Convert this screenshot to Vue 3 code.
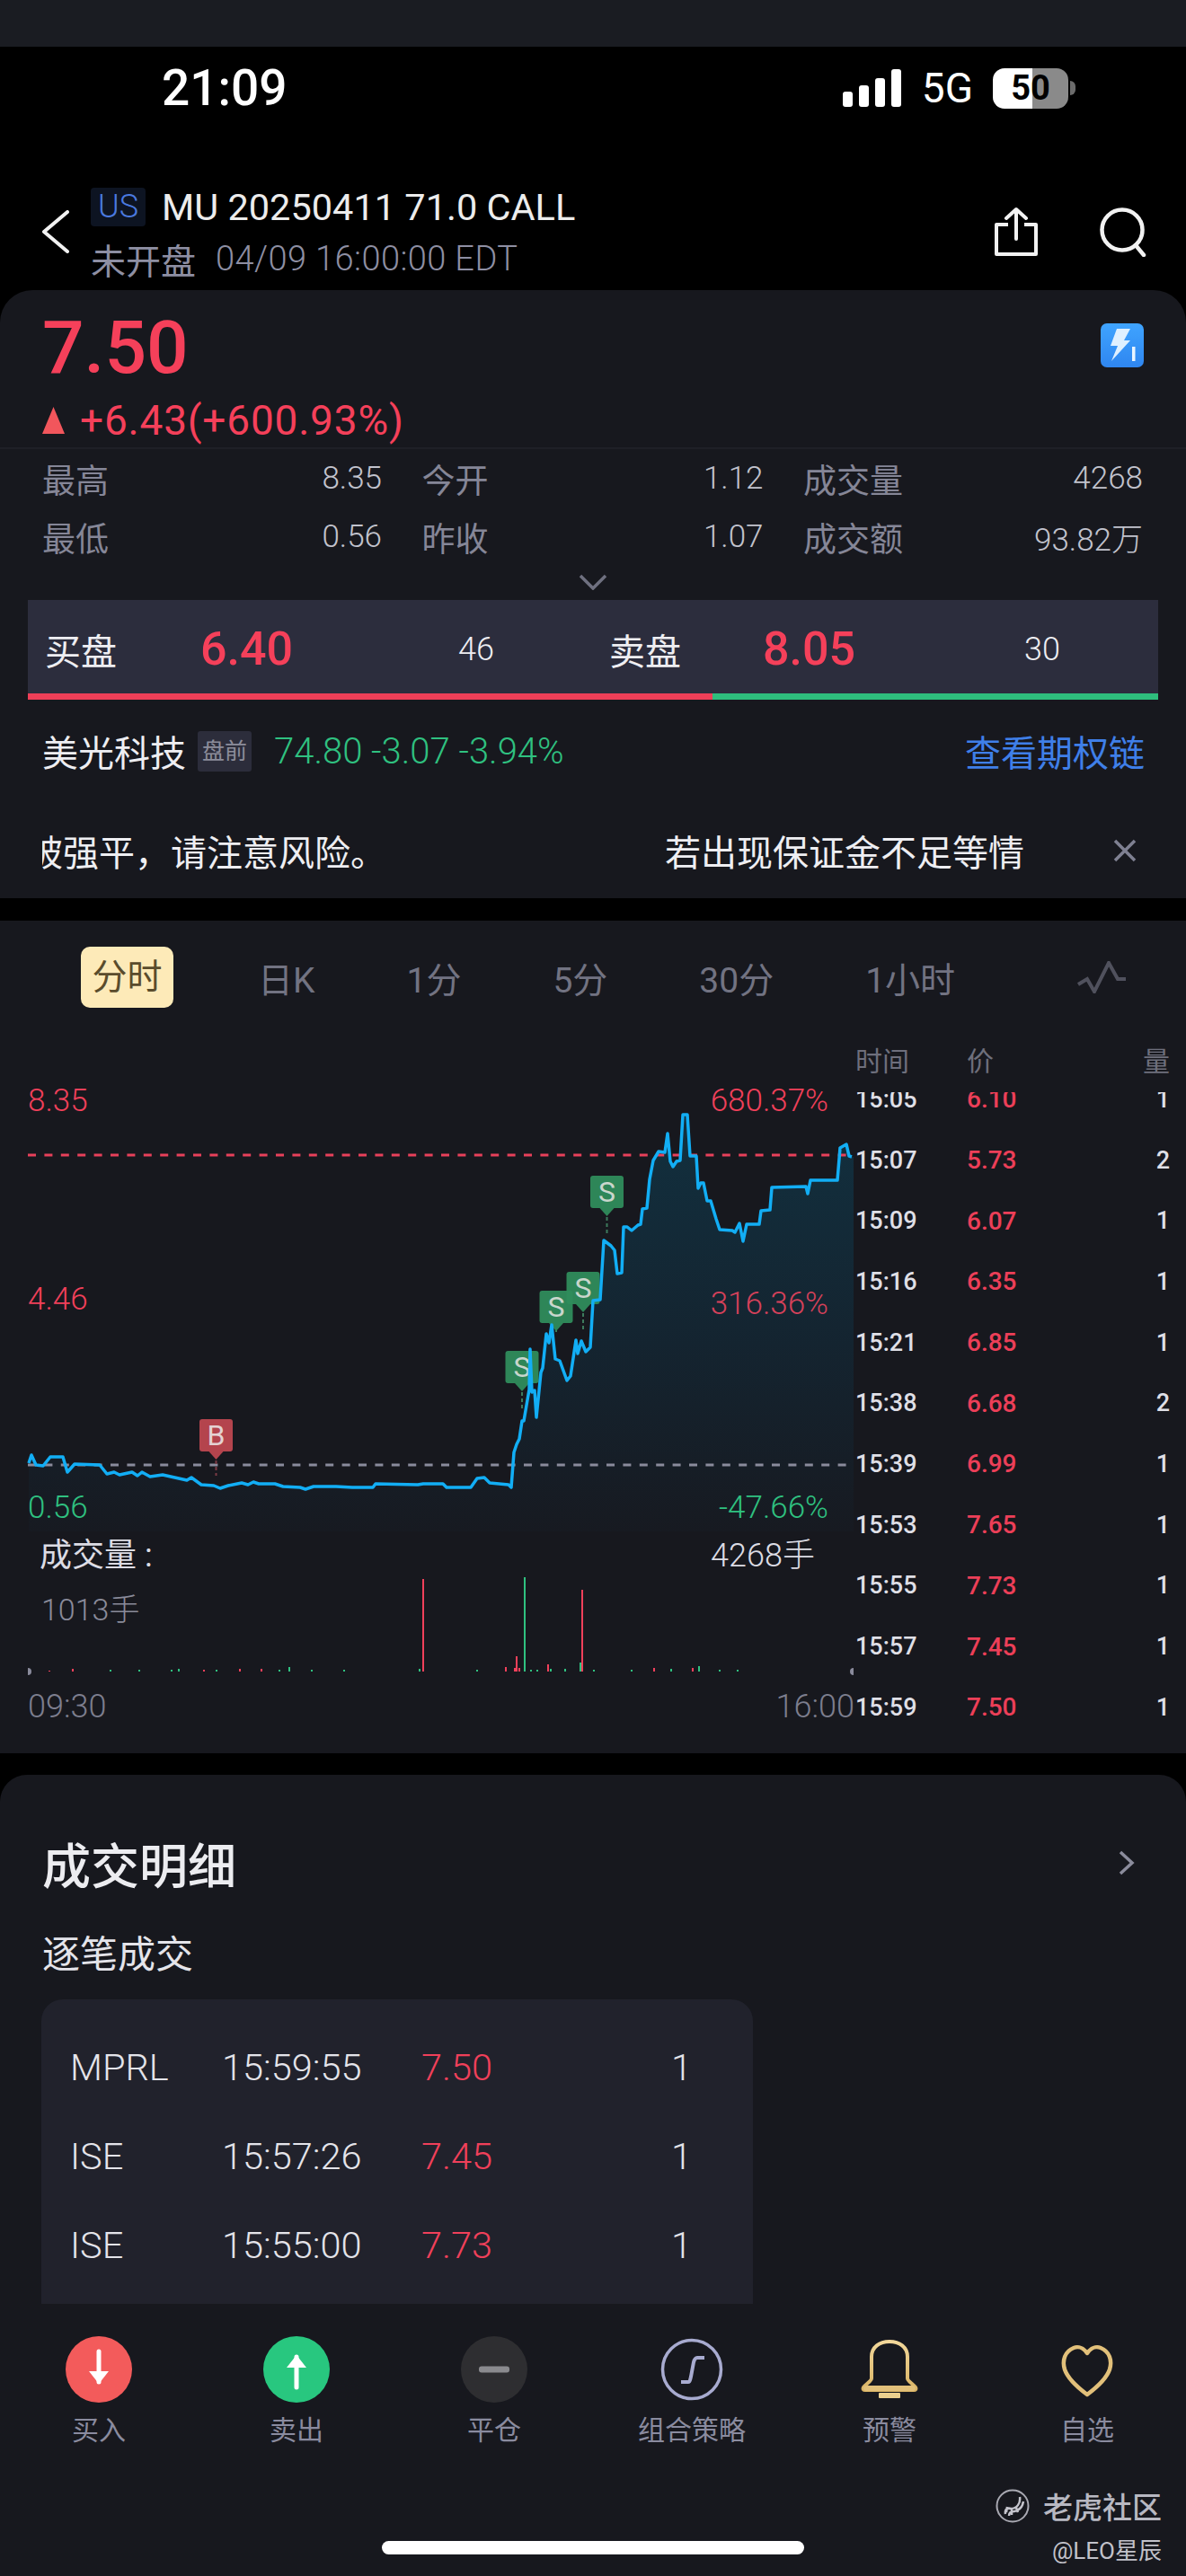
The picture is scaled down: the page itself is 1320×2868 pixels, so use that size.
<script setup>
const stats = [
  { label: '最高', value: '8.35' },
  { label: '今开', value: '1.12' },
  { label: '成交量', value: '4268' },
  { label: '最低', value: '0.56' },
  { label: '昨收', value: '1.07' },
  { label: '成交额', value: '93.82万' }
];

const tabs = ['日K', '1分', '5分', '30分', '1小时'];

const ticks = [
  ['15:05', '6.10', 1], ['15:07', '5.73', 2], ['15:09', '6.07', 1], ['15:16', '6.35', 1],
  ['15:21', '6.85', 1], ['15:38', '6.68', 2], ['15:39', '6.99', 1], ['15:53', '7.65', 1],
  ['15:55', '7.73', 1], ['15:57', '7.45', 1], ['15:59', '7.50', 1]
];

const trades = [
  ['MPRL', '15:59:55', '7.50', 1],
  ['ISE', '15:57:26', '7.45', 1],
  ['ISE', '15:55:00', '7.73', 1]
];

const actions = ['买入', '卖出', '平仓', '组合策略', '预警', '自选'];

// price line, in page coordinates
const line = [
  [32,1629],[35,1620],[40,1631],[48,1632],[56,1622],[70,1622],[75,1639],[83,1630],[111,1631],[119,1641],
  [127,1639],[133,1642],[147,1639],[153,1643],[158,1639],[167,1644],[181,1642],[208,1648],[213,1645],[224,1653],
  [238,1654],[245,1657],[254,1654],[269,1651],[276,1653],[282,1650],[288,1652],[306,1652],[315,1655],[334,1656],
  [340,1658],[349,1655],[374,1655],[392,1656],[415,1656],[418,1652],[465,1653],[471,1652],[493,1652],[497,1656],
  [524,1656],[531,1646],[539,1645],[545,1651],[566,1653],[569,1656],[572,1617],[575,1608],[578,1602],[581,1582],
  [583,1582],[589,1547],[590,1502],[592,1550],[595,1548],[597,1578],[602,1528],[604,1523],[608,1485],[611,1495],
  [614,1475],[618,1513],[623,1515],[631,1537],[635,1532],[641,1492],[643,1507],[647,1493],[652,1505],[657,1500],
  [660,1448],[668,1447],[672,1381],[680,1387],[684,1392],[687,1418],[692,1417],[694,1366],[698,1366],[703,1370],
  [710,1364],[713,1363],[715,1346],[720,1345],[723,1313],[727,1292],[733,1282],[740,1283],[743,1262],[746,1293],
  [749,1299],[753,1293],[757,1292],[760,1241],[765,1241],[768,1287],[775,1287],[777,1323],[780,1317],[783,1317],
  [787,1337],[791,1337],[797,1357],[801,1369],[815,1370],[818,1372],[823,1362],[827,1382],[831,1363],[845,1363],
  [847,1348],[857,1347],[859,1322],[897,1321],[899,1329],[902,1314],[932,1314],[935,1278],[942,1274],[945,1287],[948,1288]
];
const linePoints = line.map((p) => p.join(',')).join(' ');
const areaPoints = `32,1705 ${linePoints} 950,1288 950,1705`;

const markers = [
  { x: 581, y: 1504, h: 1568, label: 'S' },
  { x: 619, y: 1437, h: 1481, label: 'S' },
  { x: 649, y: 1416, h: 1480, label: 'S' },
  { x: 675.5, y: 1309, h: 1373, label: 'S' },
  { x: 240.5, y: 1580, h: 1643, label: 'B' }
];

const red = '#f0405a';
const green = '#2fc180';
const bars = [
  [470, 1758, red], [583, 1756, green], [647, 1770, red], [574, 1844, red], [609, 1853, red],
  [562, 1856, red], [645, 1851, green], [321, 1856, green], [80, 1858, red], [777, 1855, green],
  [770, 1857, red], [727, 1857, red], [572, 1857, red], [577, 1857, red], [466, 1858, green],
  [266, 1858, red], [290, 1858, red], [198, 1858, green], [54, 1860, red], [122, 1859, green],
  [154, 1859, green], [190, 1859, green], [226, 1859, red], [240, 1859, green], [310, 1859, green],
  [346, 1859, green], [382, 1859, green], [530, 1859, green], [590, 1859, green], [597, 1859, green],
  [612, 1858, green], [628, 1858, green], [660, 1859, green], [702, 1859, green], [746, 1858, green],
  [800, 1859, green], [820, 1859, green]
];
</script>

<template>
  <div class="page" lang="zh-CN">
    <div class="top-band"></div>

    <header class="header">
      <div class="status">
        <span class="clock">21:09</span>
        <div class="status-right">
          <svg class="signal" width="66" height="42" viewBox="0 0 66 42">
            <rect x="0" y="25" width="11" height="17" rx="3" />
            <rect x="18" y="18" width="11" height="24" rx="3" />
            <rect x="36" y="10" width="11" height="32" rx="3" />
            <rect x="54" y="0" width="11" height="42" rx="3" />
          </svg>
          <span class="net">5G</span>
          <div class="battery"><span>50</span></div>
          <i class="battery-nub"></i>
        </div>
      </div>

      <div class="nav">
        <svg class="back" width="53" height="48" viewBox="0 0 53 48">
          <path d="M29 2 L3 24 L29 46" fill="none" stroke="#f2f2f2" stroke-width="4" stroke-linecap="round" stroke-linejoin="round" />
        </svg>
        <div class="nav-title">
          <div class="title-line">
            <span class="market">US</span>
            <span class="contract">MU 20250411 71.0 CALL</span>
          </div>
          <div class="sub-line">
            <span class="session">未开盘</span>
            <span class="stamp">04/09 16:00:00 EDT</span>
          </div>
        </div>
        <svg class="share" width="52" height="56" viewBox="0 0 52 56">
          <path d="M17 20 H4 V53 H48 V20 H35" fill="none" stroke="#f2f2f2" stroke-width="4" stroke-linejoin="round" />
          <path d="M26 36 V4 M15 13 L26 3 L37 13" fill="none" stroke="#f2f2f2" stroke-width="4" stroke-linecap="round" stroke-linejoin="round" />
        </svg>
        <svg class="search" width="54" height="56" viewBox="0 0 54 56">
          <circle cx="26" cy="26" r="22.5" fill="none" stroke="#f2f2f2" stroke-width="4.5" />
          <path d="M41 43 L50 54" stroke="#f2f2f2" stroke-width="4.5" stroke-linecap="round" />
        </svg>
      </div>
    </header>

    <section class="quote-panel">
      <div class="quote">
        <div>
          <div class="price">7.50</div>
          <div class="change">
            <svg width="25" height="30" viewBox="0 0 25 30"><path d="M12.5 0 L25 30 H0 Z" fill="#f2565c" /></svg>
            <span>+6.43(+600.93%)</span>
          </div>
        </div>
        <svg class="bolt" width="48" height="49" viewBox="0 0 48 49">
          <defs>
            <linearGradient id="boltBg" x1="0" y1="0" x2="0" y2="1">
              <stop offset="0" stop-color="#3fa4ff" />
              <stop offset="1" stop-color="#2f86f0" />
            </linearGradient>
          </defs>
          <rect width="48" height="49" rx="7" fill="url(#boltBg)" />
          <path d="M18 6 H33 L26 19 H33 L12 42 L19 25 H11 Z" fill="#dff0ff" />
          <rect x="35" y="26" width="3.5" height="16" fill="#eaf5ff" />
        </svg>
      </div>

      <div class="stats">
        <div v-for="s in stats" :key="s.label" class="stat">
          <span class="stat-label">{{ s.label }}</span>
          <span class="stat-value">{{ s.value }}</span>
        </div>
      </div>

      <div class="expand">
        <svg width="32" height="18" viewBox="0 0 32 18">
          <path d="M2 2 L16 16 L30 2" fill="none" stroke="#6f7080" stroke-width="3.5" />
        </svg>
      </div>

      <div class="book">
        <div class="book-row">
          <span class="book-label">买盘</span>
          <span class="book-price">6.40</span>
          <span class="book-size">46</span>
          <span class="book-label ask">卖盘</span>
          <span class="book-price">8.05</span>
          <span class="book-size">30</span>
        </div>
        <div class="book-bar"><i class="bar-buy"></i><i class="bar-sell"></i></div>
      </div>

      <div class="underlying">
        <span class="under-name">美光科技</span>
        <span class="under-tag">盘前</span>
        <span class="under-quote">74.80 -3.07 -3.94%</span>
        <span class="chain-link">查看期权链</span>
      </div>

      <div class="notice">
        <div class="notice-window">
          <div class="notice-track">
            <span>被强平，请注意风险。</span>
            <span>若出现保证金不足等情</span>
          </div>
        </div>
        <svg class="notice-close" width="28" height="28" viewBox="0 0 28 28">
          <path d="M3 3 L25 25 M25 3 L3 25" stroke="#7f8092" stroke-width="3.5" />
        </svg>
      </div>
    </section>

    <section class="chart-panel">
      <div class="tabs">
        <span class="tab-active">分时</span>
        <span v-for="t in tabs" :key="t" class="tab">{{ t }}</span>
        <svg class="tab-icon" width="58" height="36" viewBox="1200 1070 58 36">
          <polyline points="1202,1096 1212,1090 1220,1104 1236,1072 1246,1090 1255,1090" fill="none" stroke="#50515d" stroke-width="4" />
        </svg>
      </div>

      <div class="chart-body">
        <div class="plot">
          <svg class="plot-svg" width="952" height="802" viewBox="0 1150 952 802">
            <defs>
              <linearGradient id="areaFill" x1="0" y1="0" x2="0" y2="1">
                <stop offset="0" stop-color="#12303f" />
                <stop offset="0.55" stop-color="#142430" />
                <stop offset="1" stop-color="#171a21" />
              </linearGradient>
            </defs>
            <polygon :points="areaPoints" fill="url(#areaFill)" />
            <line x1="31" y1="1286" x2="950" y2="1286" stroke="#e8405a" stroke-width="3" stroke-dasharray="9 9.4" />
            <line x1="31" y1="1631" x2="950" y2="1631" stroke="#8a8b9c" stroke-width="3" stroke-dasharray="9 9.4" />

            <g v-for="m in markers" :key="m.x" :class="m.label === 'B' ? 'mark-buy' : 'mark-sell'">
              <line :x1="m.x" :y1="m.y + 46" :x2="m.x" :y2="m.h" stroke-width="2" stroke-dasharray="4 3" class="mark-stem" />
              <rect :x="m.x - 18.5" :y="m.y" width="37" height="36" rx="3" class="mark-box" />
              <path :d="`M${m.x - 8} ${m.y + 36} L${m.x} ${m.y + 45} L${m.x + 8} ${m.y + 36} Z`" class="mark-box" />
              <text :x="m.x" :y="m.y + 29" text-anchor="middle" class="mark-text">{{ m.label }}</text>
            </g>

            <polyline :points="linePoints" fill="none" stroke="#12aef5" stroke-width="3.5" stroke-linejoin="round" />

            <rect v-for="(b, i) in bars" :key="i" :x="b[0]" :y="b[1]" width="2" :height="1861 - b[1]" :fill="b[2]" />
            <path d="M31 1857 A4 4 0 0 1 31 1865 Z" fill="#8a8b9c" />
            <path d="M950 1857 A4 4 0 0 0 950 1865 Z" fill="#8a8b9c" />
          </svg>

          <span class="axis axis-up left" style="top: 56px">8.35</span>
          <span class="axis axis-up left" style="top: 277px">4.46</span>
          <span class="axis axis-down left" style="top: 509px">0.56</span>
          <span class="axis axis-up right" style="top: 56px">680.37%</span>
          <span class="axis axis-mid right" style="top: 282px">316.36%</span>
          <span class="axis axis-down right" style="top: 509px">-47.66%</span>

          <span class="vol-title">成交量 :</span>
          <span class="vol-total">4268手</span>
          <span class="vol-now">1013手</span>
          <span class="time-from">09:30</span>
          <span class="time-to">16:00</span>
        </div>

        <div class="ticks">
          <div class="ticks-head">
            <span>时间</span>
            <span>价</span>
            <span class="qty">量</span>
          </div>
          <div class="ticks-list">
            <div class="ticks-inner">
              <div v-for="t in ticks" :key="t[0]" class="tick">
                <span>{{ t[0] }}</span>
                <span class="tick-price">{{ t[1] }}</span>
                <span class="qty">{{ t[2] }}</span>
              </div>
            </div>
          </div>
        </div>
      </div>
    </section>

    <section class="detail-panel">
      <div class="detail-head">
        <h2>成交明细</h2>
        <svg width="20" height="30" viewBox="0 0 20 30">
          <path d="M3 3 L16 15 L3 27" fill="none" stroke="#8b8c9c" stroke-width="3.5" />
        </svg>
      </div>
      <div class="detail-sub">逐笔成交</div>
      <div class="trade-card">
        <div v-for="t in trades" :key="t[1]" class="trade">
          <span>{{ t[0] }}</span>
          <span>{{ t[1] }}</span>
          <span class="trade-price">{{ t[2] }}</span>
          <span class="trade-qty">{{ t[3] }}</span>
        </div>
      </div>
    </section>

    <footer class="actions">
      <div v-for="(a, i) in actions" :key="a" class="action">
        <svg width="80" height="80" viewBox="0 0 80 80">
          <defs v-if="i === 4">
            <linearGradient id="gold" x1="0" y1="0" x2="0" y2="1">
              <stop offset="0" stop-color="#f2d79a" />
              <stop offset="1" stop-color="#d9b364" />
            </linearGradient>
          </defs>
          <template v-if="i === 0">
            <circle cx="40" cy="40" r="37" fill="#f35b5b" />
            <path d="M40 20 V54" stroke="#fff" stroke-width="5" stroke-linecap="round" />
            <path d="M29 42 L40 56 L51 42 Z" fill="#fff" />
          </template>
          <template v-else-if="i === 1">
            <circle cx="40" cy="40" r="37" fill="#28c77f" />
            <path d="M40 26 V60" stroke="#fff" stroke-width="5" stroke-linecap="round" />
            <path d="M29 38 L40 24 L51 38 Z" fill="#fff" />
          </template>
          <template v-else-if="i === 2">
            <circle cx="40" cy="40" r="37" fill="#2e2e31" />
            <rect x="23" y="36.5" width="34" height="7" rx="3" fill="#8a8a8e" />
          </template>
          <template v-else-if="i === 3">
            <circle cx="40" cy="40" r="32.5" fill="none" stroke="#a8abd0" stroke-width="3.5" />
            <path d="M28 54 H36 C38 54 38 52 39 48 L42 32 C43 28 44 27 46 27 H54" fill="none" stroke="#a8abd0" stroke-width="4" />
          </template>
          <template v-else-if="i === 4">
            <path d="M20 50 V26 C20 15 29 9 40 9 C51 9 60 15 60 26 V50 C60 53 66 56 69 60 C70 62 69 63 67 63 H13 C11 63 10 62 11 60 C14 56 20 53 20 50 Z" fill="none" stroke="url(#gold)" stroke-width="4" stroke-linejoin="round" />
            <rect x="11" y="58" width="58" height="6" rx="3" fill="#e2c07a" />
            <rect x="28" y="66" width="24" height="6" rx="1" fill="#ecd08f" />
          </template>
          <template v-else>
            <path d="M40 22 C36 16 30 14 25 16 C15 20 12 30 15 40 C19 52 32 62 40 68 C48 62 61 52 65 40 C68 30 65 20 55 16 C50 14 44 16 40 22 Z" fill="none" stroke="#e2c07a" stroke-width="4.5" stroke-linejoin="round" />
          </template>
        </svg>
        <span>{{ a }}</span>
      </div>

      <div class="watermark">
        <div class="wm-top">
          <svg width="38" height="38" viewBox="0 0 38 38">
            <circle cx="19" cy="19" r="17.5" fill="none" stroke="#a9a9b2" stroke-width="2" />
            <path d="M11 28 C10 22 14 21 17 22 C24 22 28 16 27 9 M15 30 C15 26 18 25 21 25 C26 24 30 20 31 14 M13 20 L12 26 M18 23 L18 29 M23 21 L25 26" fill="none" stroke="#c4c4cc" stroke-width="2.5" />
          </svg>
          <span>老虎社区</span>
        </div>
        <div class="wm-user">@LEO星辰</div>
      </div>
      <div class="home-bar"></div>
    </footer>
  </div>
</template>

<style scoped>
.page {
  position: relative;
  display: flex;
  flex-direction: column;
  width: 1320px;
  height: 2868px;
  overflow: hidden;
  background: #000;
  font-family: Roboto, "Noto Sans CJK SC", sans-serif;
  color: #e8e8ee;
}

.top-band {
  height: 52px;
  background: #1a1c22;
}

.header {
  height: 271px;
  background: #000;
}

.status {
  display: flex;
  justify-content: space-between;
  align-items: center;
  height: 92px;
  padding: 0 123px 0 180px;
}

.clock {
  font-size: 55px;
  font-weight: 500;
  color: #fff;
}

.status-right {
  display: flex;
  align-items: center;
  position: relative;
}

.signal {
  fill: #fff;
  margin-right: 22px;
}

.net {
  font-size: 46px;
  color: #fff;
  margin-right: 22px;
}

.battery {
  position: relative;
  width: 84px;
  height: 45px;
  border-radius: 13px;
  background: linear-gradient(90deg, #fff 0, #fff 52%, #8a8a8a 52%, #8a8a8a 100%);
  display: flex;
  align-items: center;
  justify-content: center;
}

.battery span {
  font-size: 38px;
  font-weight: 700;
  color: #000;
}

.battery-nub {
  display: block;
  width: 6px;
  height: 16px;
  margin-left: 2px;
  border-radius: 0 6px 6px 0;
  background: #6c6c6c;
}

.nav {
  display: flex;
  align-items: center;
  margin-top: 65px;
  height: 98px;
  padding-left: 46px;
}

.back {
  flex: none;
  margin-right: 2px;
}

.nav-title {
  flex: 1;
}

.title-line {
  display: flex;
  align-items: center;
  height: 43px;
}

.market {
  width: 61px;
  height: 43px;
  line-height: 43px;
  text-align: center;
  border-radius: 4px;
  background: #0d1422;
  color: #4a79df;
  font-size: 36px;
  font-weight: 300;
  margin-right: 18px;
}

.contract {
  font-size: 41.5px;
  color: #ececec;
}

.sub-line {
  display: flex;
  align-items: center;
  gap: 22px;
  margin-top: 17px;
  height: 38px;
  color: #8e8fa3;
}

.session {
  font-size: 39px;
}

.stamp {
  font-size: 38px;
  font-weight: 300;
  letter-spacing: 0.4px;
}

.share {
  margin-right: 66px;
}

.search {
  margin-right: 43px;
}

.quote-panel {
  height: 677px;
  background: #17181e;
  border-radius: 36px 36px 0 0;
}

.quote {
  display: flex;
  justify-content: space-between;
  height: 177px;
  padding: 22px 47px 0;
  border-bottom: 2px solid #1f2027;
  box-sizing: border-box;
}

.price {
  font-size: 82px;
  line-height: 84px;
  font-weight: 500;
  color: #f5405a;
}

.change {
  display: flex;
  align-items: center;
  gap: 17px;
  margin-top: 17px;
  height: 44px;
  font-size: 46px;
  letter-spacing: 0.8px;
  color: #f5405a;
}

.bolt {
  margin-top: 15px;
}

.stats {
  display: grid;
  grid-template-columns: 378px 380px 378px;
  column-gap: 44.5px;
  padding-left: 47px;
}

.stat {
  display: flex;
  justify-content: space-between;
  align-items: center;
  height: 65px;
}

.stat-label {
  font-size: 37px;
  color: #858697;
}

.stat-value {
  font-size: 35px;
  font-weight: 300;
  color: #c2c3cd;
}

.expand {
  display: flex;
  justify-content: center;
  align-items: center;
  height: 36px;
  padding-bottom: 2px;
}

.book {
  margin: 0 31px;
}

.book-row {
  display: grid;
  grid-template-columns: 192px 207px 200px 219px 211px 200px;
  align-items: center;
  height: 104px;
  padding-top: 5px;
  box-sizing: border-box;
  background: #2c2d3d;
}

.book-label {
  font-size: 40px;
  padding-left: 19px;
  color: #eeeef2;
}

.book-label.ask {
  padding-left: 48px;
}

.book-price {
  font-size: 52px;
  font-weight: 500;
  color: #f5405a;
}

.book-size {
  font-size: 36px;
  font-weight: 300;
  text-align: center;
  color: #eeeef2;
}

.book-bar {
  display: flex;
  height: 7px;
}

.bar-buy {
  width: 762px;
  background: #ee3f58;
}

.bar-sell {
  flex: 1;
  background: #2ebe7d;
}

.underlying {
  display: flex;
  align-items: center;
  height: 114px;
  padding: 0 46px 0 47px;
}

.under-name {
  font-size: 40px;
  color: #eeeef2;
  margin-right: 13px;
}

.under-tag {
  width: 60px;
  height: 45px;
  line-height: 45px;
  text-align: center;
  font-size: 25px;
  border-radius: 3px;
  background: #2c2d3b;
  color: #8c8d9b;
  margin-right: 25px;
}

.under-quote {
  flex: 1;
  font-size: 40px;
  font-weight: 300;
  color: #2fc180;
}

.chain-link {
  font-size: 40px;
  color: #3f7fe8;
}

.notice {
  display: flex;
  align-items: center;
  height: 107px;
  padding-left: 47px;
}

.notice-window {
  width: 1120px;
  overflow: hidden;
}

.notice-track {
  display: flex;
  gap: 310px;
  margin-left: -17px;
  width: 1300px;
  font-size: 40px;
  color: #eeeef2;
}

.notice-close {
  margin-left: 71px;
}

.chart-panel {
  margin-top: 25px;
  height: 927px;
  background: #17181e;
}

.tabs {
  display: flex;
  align-items: center;
  gap: 102px;
  height: 125px;
  padding: 0 64px 0 90px;
  font-size: 39px;
  color: #727382;
}

.tab-active {
  width: 103px;
  height: 68px;
  line-height: 68px;
  margin-right: -8px;
  text-align: center;
  border-radius: 10px;
  background: #fdeab8;
  color: #5a4c2c;
}

.tab-icon {
  margin-left: auto;
}

.chart-body {
  display: flex;
  height: 802px;
}

.plot {
  position: relative;
  width: 952px;
  flex: none;
}

.plot-svg {
  display: block;
}

.mark-sell .mark-box {
  fill: #2f8c5c;
  opacity: 0.95;
}

.mark-sell .mark-stem {
  stroke: #3d7a5c;
}

.mark-buy .mark-box {
  fill: #b4444d;
}

.mark-buy .mark-stem {
  stroke: #7c3a44;
}

.mark-text {
  font-size: 32px;
  fill: #c9d6cc;
}

.mark-buy .mark-text {
  fill: #e4d2d2;
}

.axis {
  position: absolute;
  font-size: 35px;
  line-height: 40px;
  font-weight: 300;
}

.axis.left {
  left: 31px;
}

.axis.right {
  right: 30px;
}

.axis-up {
  color: #f0405a;
}

.axis-mid {
  color: #d4415a;
}

.axis-down {
  color: #2fc180;
}

.vol-title,
.vol-total,
.vol-now,
.time-from,
.time-to {
  position: absolute;
  line-height: 44px;
}

.vol-title {
  left: 44px;
  top: 560px;
  font-size: 36px;
  color: #dcdce4;
}

.vol-total {
  right: 45px;
  top: 560px;
  font-size: 36px;
  font-weight: 300;
  color: #dcdce4;
}

.vol-now {
  left: 46px;
  top: 620px;
  font-size: 34px;
  font-weight: 300;
  color: #8a8b9a;
}

.time-from {
  left: 31px;
  top: 728px;
  font-size: 36px;
  font-weight: 300;
  color: #7d7e8e;
}

.time-to {
  right: 1px;
  top: 728px;
  font-size: 36px;
  font-weight: 300;
  color: #7d7e8e;
}

.ticks {
  flex: 1;
  min-width: 0;
}

.ticks-head {
  display: grid;
  grid-template-columns: 124px 1fr 60px;
  align-items: center;
  height: 66px;
  padding: 0 18px 8px 0;
  box-sizing: border-box;
  font-size: 30px;
  color: #6e6f7c;
}

.ticks-list {
  height: 736px;
  overflow: hidden;
}

.ticks-inner {
  margin-top: -26px;
}

.tick {
  display: grid;
  grid-template-columns: 124px 1fr 60px;
  align-items: center;
  height: 67.7px;
  padding-right: 18px;
  font-size: 27px;
  font-weight: 500;
  color: #dfdfe6;
}

.tick-price {
  font-size: 28px;
  color: #ec3f58;
}

.qty {
  text-align: right;
}

.detail-panel {
  margin-top: 24px;
  flex: 1;
  min-height: 0;
  overflow: hidden;
  background: #17181e;
  border-radius: 30px 30px 0 0;
}

.detail-head {
  display: flex;
  justify-content: space-between;
  align-items: center;
  height: 62px;
  margin-top: 67px;
  padding: 0 56px 0 47px;
}

.detail-head h2 {
  margin: 0;
  font-size: 54px;
  font-weight: 500;
  color: #ececf0;
}

.detail-sub {
  margin-top: 47px;
  padding-left: 47px;
  line-height: 50px;
  font-size: 42px;
  color: #e4e4ea;
}

.trade-card {
  width: 792px;
  height: 400px;
  margin: 24px 0 0 46px;
  padding: 26px 0 0 32px;
  box-sizing: border-box;
  border-radius: 24px 24px 0 0;
  background: #21222c;
}

.trade {
  display: grid;
  grid-template-columns: 169px 222px 200px 101px;
  align-items: center;
  height: 99px;
  font-size: 41.5px;
  font-weight: 300;
  color: #e4e4ea;
}

.trade-price {
  color: #f0405a;
}

.trade-qty {
  text-align: right;
}

.actions {
  position: relative;
  display: grid;
  grid-template-columns: repeat(6, 220px);
  height: 303px;
  padding-top: 33px;
  box-sizing: border-box;
  background: #17181e;
}

.action {
  display: flex;
  flex-direction: column;
  align-items: center;
  font-size: 30px;
  line-height: 36px;
  color: #8a8b9f;
}

.action span {
  margin-top: 10px;
}

.watermark {
  position: absolute;
  right: 27px;
  top: 205px;
  text-align: right;
}

.wm-top {
  display: flex;
  align-items: center;
  gap: 15px;
  height: 40px;
  font-size: 33px;
  font-weight: 500;
  color: #b8b8c2;
}

.wm-user {
  margin-top: 12px;
  font-size: 26px;
  line-height: 36px;
  color: #c2c2ca;
}

.home-bar {
  position: absolute;
  left: 425px;
  top: 264px;
  width: 470px;
  height: 15px;
  border-radius: 8px;
  background: #fff;
}
</style>
